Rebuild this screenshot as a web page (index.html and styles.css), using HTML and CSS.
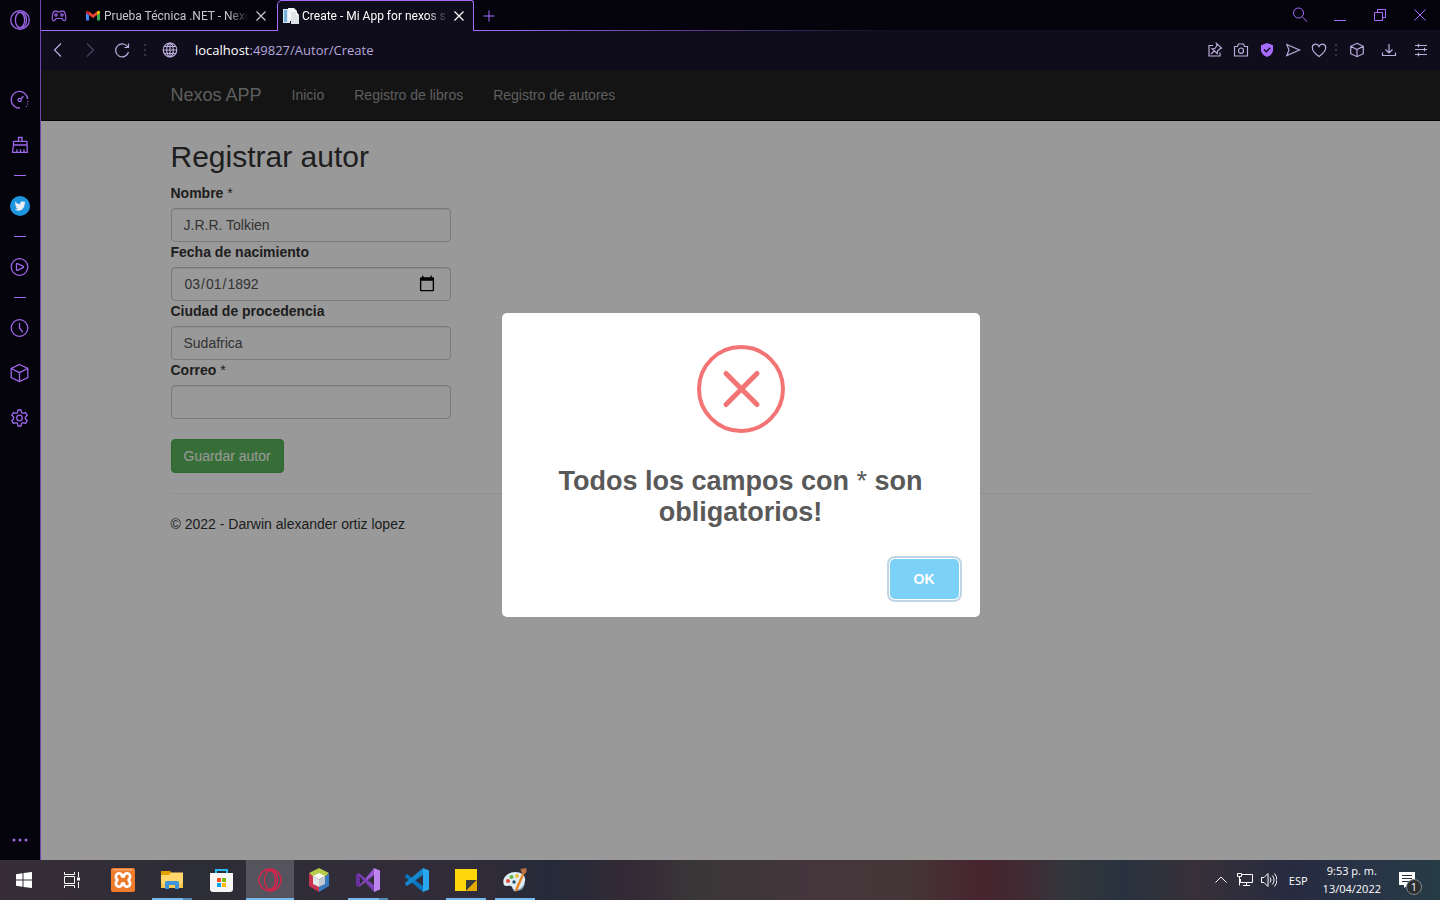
FILE: index.html
```html
<!DOCTYPE html>
<html lang="es">
<head>
<meta charset="utf-8">
<meta name="viewport" content="width=device-width, initial-scale=1">
<title>Create - Mi App for nexos s</title>
<link rel="stylesheet" href="styles.css">
</head>
<body>
<div class="desktop">
  <div class="browser">
    <aside class="sidebar">
      <button class="side-btn side-logo" aria-label="Opera"><svg viewBox="0 0 20 20"><circle cx="10" cy="10" r="9.3"/><ellipse cx="10" cy="10" rx="4.6" ry="7.6"/><path d="M7.5 2.9C12 .5 16.500 4 16.500 10s-4.500 9.500-9 7.100"/></svg></button>
      <div class="side-group">
        <button class="side-btn" aria-label="GX Control"><svg viewBox="0 0 20 20"><path d="M10 18A8.300 8.300 0 1 1 17.700 9"/><path d="M17.800 11v1M17.500 13.500v1M16.500 16v1" /><circle cx="9.700" cy="10" r="1.600"/><path d="M10.900 8.800l2.600-2.600"/></svg></button>
        <button class="side-btn" aria-label="GX Cleaner"><svg viewBox="0 0 20 20"><path d="M8.500 6.500V2.500h3.500v4M3.500 10V7q0-.7.700-.7h12.100q.7 0 .7.700v3zM3.500 10l-1 7.300h14.700V10M6.500 17.300l.7-3M10.500 17.300v-3M14 17.300v-3"/></svg></button>
      </div>
      <span class="side-dash"></span>
      <button class="side-btn" aria-label="Twitter"><svg class="solid" viewBox="0 0 20 20"><circle cx="10" cy="10" r="10" fill="#1d96df"/><path fill="#e9eef2" d="M15.800 6.400c-.4.200-.9.300-1.300.4.500-.3.800-.7 1-1.300-.5.300-.9.500-1.500.6a2.300 2.300 0 0 0-3.900 2.100C8.200 8.100 6.500 7.200 5.400 5.800c-.7 1.100-.3 2.400.7 3.100-.4 0-.7-.1-1-.3 0 1.200.8 2.100 1.800 2.300-.3.100-.7.100-1 0 .3.900 1.100 1.600 2.100 1.600-1 .8-2.200 1.100-3.400 1 4.800 3 10.100-.3 10-5.800.5-.4.900-.8 1.200-1.300z"/></svg></button>
      <span class="side-dash"></span>
      <button class="side-btn" aria-label="Player"><svg viewBox="0 0 20 20"><circle cx="9.500" cy="10" r="8.300"/><path d="M6.500 7.300q0-1 1-.7l5.500 2.500q1.200.8 0 1.600l-5.500 2.600q-1 .2-1-.8z"/></svg></button>
      <span class="side-dash"></span>
      <div class="side-group">
        <button class="side-btn" aria-label="Historial"><svg viewBox="0 0 20 20"><circle cx="9.500" cy="10" r="8.300"/><path d="M9.500 5v5l3.200 4"/></svg></button>
        <button class="side-btn" aria-label="Extensiones"><svg viewBox="0 0 20 20"><path d="M9.500 1.500l8.300 4v9l-8.300 4-8.300-4v-9zM1.200 5.500l8.300 4.200 8.300-4.200M9.500 9.700v8.800"/></svg></button>
        <button class="side-btn" aria-label="Ajustes"><svg viewBox="0 0 20 20"><path d="M8 2h3l.6 2.600 1.300.8 2.700-.8 1.600 2.700L15.300 9.300v1.400l1.900 2-1.600 2.700-2.700-.8-1.300.8L11 18H8l-.6-2.600-1.300-.8-2.700.8-1.600-2.700 1.900-2V9.300l-1.900-2 1.600-2.700 2.700.8 1.300-.8z"/><circle cx="9.500" cy="10" r="2.800"/></svg></button>
      </div>
      <button class="side-btn side-more" aria-label="Más"><svg class="solid" viewBox="0 0 20 20"><g fill="#9d67ea"><circle cx="4" cy="10" r="1.500"/><circle cx="10" cy="10" r="1.500"/><circle cx="16" cy="10" r="1.500"/></g></svg></button>
    </aside>

    <div class="window">
      <header class="tabstrip">
        <button class="corner" aria-label="GX Corner"><svg viewBox="0 0 16 16"><path d="M4 3.200h1.800l.8.700h2.800l.8-.7H12c1.500 0 2 1.200 2.500 3.800s.6 5.500-1 5.700c-1.200 0-2-1.700-2.700-2.200H5.200c-.7.500-1.500 2.200-2.700 2.200-1.600-.2-1.500-3.100-1-5.700S2.500 3.200 4 3.200z"/><circle cx="5" cy="7" r="1.200"/><circle cx="11" cy="7" r="1.200"/></svg></button>
        <div class="tab">
          <svg class="tab-icon gmail" viewBox="0 0 14 12"><path fill="#4285f4" d="M0 2v8.500h3V5z"/><path fill="#34a853" d="M14 2v8.500h-3V5z"/><path fill="#ea4335" d="M3 5V1.500l4 3 4-3V5L7 8z"/><path fill="#c5221f" d="M0 2Q.3-.3 3 1.500V5L0 3z"/><path fill="#fbbc04" d="M14 2q-.3-2.300-3-.5V5l3-2z"/></svg>
          <span class="tab-title">Prueba Técnica .NET - Nexo</span>
          <button class="tab-close" aria-label="Cerrar pestaña"><svg viewBox="0 0 10 10"><path d="M.5.5l9 9M9.500.5l-9 9"/></svg></button>
        </div>
        <div class="tab tab-active">
          <svg class="tab-icon" viewBox="0 0 16 16"><path fill="#d9e6ef" d="M0 1h7v14H0z"/><path fill="#78b5dc" d="M1 2h3v12H1z"/><path fill="#f3f5f7" d="M5 0h6l3 3v10H5z"/><path fill="#dfe4e8" d="M8 4h5l3 3v9H8z"/><path fill="#fff" d="M13 4v3h3z"/></svg>
          <span class="tab-title">Create - Mi App for nexos s</span>
          <button class="tab-close" aria-label="Cerrar pestaña"><svg viewBox="0 0 10 10"><path d="M.5.5l9 9M9.500.5l-9 9"/></svg></button>
        </div>
        <button class="new-tab" aria-label="Nueva pestaña"><svg viewBox="0 0 12 12"><path d="M6 .5v11M.5 6h11"/></svg></button>
        <div class="win-controls">
          <button aria-label="Buscar"><svg viewBox="0 0 16 16"><circle cx="6.500" cy="6" r="5"/><path d="M10.200 9.800l5 4.900"/></svg></button>
          <button aria-label="Minimizar"><svg viewBox="0 0 16 16"><path d="M2 13.500h12"/></svg></button>
          <button aria-label="Restaurar"><svg viewBox="0 0 16 16"><path d="M2.500 5.500h8v8h-8zM5.500 5.500v-3h8v8h-3"/></svg></button>
          <button aria-label="Cerrar"><svg viewBox="0 0 16 16"><path d="M2.500 2.500l11 11M13.500 2.500l-11 11"/></svg></button>
        </div>
      </header>

      <div class="toolbar">
        <div class="nav-buttons">
          <button aria-label="Atrás"><svg viewBox="0 0 16 16"><path d="M11 1.500L4.500 8l6.500 6.500"/></svg></button>
          <button class="dim" aria-label="Adelante"><svg viewBox="0 0 16 16"><path d="M5 1.500L11.500 8 5 14.500"/></svg></button>
          <button aria-label="Recargar"><svg viewBox="0 0 16 16"><path d="M14.500 10A6.500 6.500 0 1 1 14 5.500M14.500 1.500v4H10.500"/></svg></button>
        </div>
        <svg class="grip" viewBox="0 0 2 12"><path d="M0 0h2v2H0zM0 5h2v2H0zM0 10h2v2H0z"/></svg>
        <svg class="globe" viewBox="0 0 16 16"><circle cx="8" cy="8" r="6.800"/><ellipse cx="8" cy="8" rx="3.300" ry="6.800"/><path d="M1.200 8h13.600M8 1v14M2.200 4.500h11.600M2.200 11.500h11.600"/></svg>
        <div class="address" role="textbox" aria-label="Dirección"><span class="host">localhost</span>:49827/Autor/Create</div>
        <div class="tools">
          <button aria-label="Anclar"><svg viewBox="0 0 16 16"><path d="M6 3.500H2v10.500h11v-3.500M9.500 1.500l5 4.500-1.500.7-2.500 2.300-.3 2.500L5 6.800l3-.3 2-3zM7.300 9L4 12"/></svg></button>
          <button aria-label="Captura"><svg viewBox="0 0 16 16"><path d="M1.500 4.500h3l1-2.500h5l1 2.500h3v9.500h-13z"/><ellipse cx="8" cy="8.700" rx="2.500" ry="2.700"/></svg></button>
          <button aria-label="Bloqueador"><svg class="solid" viewBox="0 0 16 16"><path fill="#a66cff" d="M8 1l6 2.200v5q0 4.300-6 6.800-6-2.500-6-6.800v-5z"/><path fill="none" stroke="#171028" stroke-width="1.500" d="M5 7.500l2.300 2.300 4-4"/></svg></button>
          <button aria-label="Enviar"><svg viewBox="0 0 16 16"><path d="M1.800 2.500L14.500 8 1.800 13.500 4 8z"/></svg></button>
          <button aria-label="Favorito"><svg viewBox="0 0 16 16"><path d="M8 14.500C3.500 11.500 1.300 8.500 1.300 5.600 1.300 1.500 6.500.8 8 4.500c1.500-3.700 6.700-3 6.700 1.100 0 2.900-2.200 5.900-6.700 8.900z"/></svg></button>
          <svg class="grip" viewBox="0 0 2 12"><path d="M0 0h2v2H0zM0 5h2v2H0zM0 10h2v2H0z"/></svg>
          <button class="wide" aria-label="Extensiones"><svg viewBox="0 0 16 16"><path d="M8 1.300l6.300 3v7.400l-6.300 3-6.300-3V4.300zM1.700 4.300L8 7.500l6.300-3.200M8 7.500v7.200"/></svg></button>
          <button class="wide" aria-label="Descargas"><svg viewBox="0 0 16 16"><path d="M8 2v9M4.500 7.500L8 11l3.500-3.500M1.500 10.500v3h13v-3"/></svg></button>
          <button class="wide" aria-label="Configuración"><svg viewBox="0 0 16 16"><path d="M2 3.500h12M2 7.500h12M2 12.500h12M5.500 1.800v3.400M11.500 5.800v3.400M5.500 10.800v3.400"/></svg></button>
        </div>
      </div>

      <div class="page">
        <nav class="navbar">
          <div class="container navbar-inner">
            <a class="brand" href="#">Nexos APP</a>
            <a class="nav-link" href="#">Inicio</a>
            <a class="nav-link" href="#">Registro de libros</a>
            <a class="nav-link" href="#">Registro de autores</a>
          </div>
        </nav>
        <main class="container">
          <h2>Registrar autor</h2>
          <form class="form">
            <label for="nombre">Nombre <span class="required">*</span></label>
            <input id="nombre" type="text" value="J.R.R. Tolkien">
            <label for="fecha">Fecha de nacimiento</label>
            <input id="fecha" type="date" value="1892-03-01">
            <label for="ciudad">Ciudad de procedencia</label>
            <input id="ciudad" type="text" value="Sudafrica">
            <label for="correo">Correo <span class="required">*</span></label>
            <input id="correo" type="email">
            <button class="save" type="button">Guardar autor</button>
          </form>
          <hr>
          <footer>© 2022 - Darwin alexander ortiz lopez</footer>
        </main>
        <div class="overlay">
          <div class="modal" role="alertdialog" aria-labelledby="modal-title">
            <svg class="modal-icon" viewBox="0 0 88 88"><circle cx="44" cy="44" r="42"/><path d="M29 28.500l31 31M60 28.500l-31 31"/></svg>
            <h3 class="modal-title" id="modal-title">Todos los campos con <span class="required">*</span> son obligatorios!</h3>
            <div class="modal-footer"><button class="ok" type="button">OK</button></div>
          </div>
        </div>
      </div>
    </div>
  </div>

  <div class="taskbar">
    <button class="task" aria-label="Inicio"><svg viewBox="0 0 24 24"><path fill="#fff" d="M4 6.300l6.500-1v6.200H4zM11.500 5.100L20 4v7.500h-8.500zM4 12.500h6.500v6.200L4 17.700zM11.500 12.500H20V20l-8.500-1.100z"/></svg></button>
    <button class="task" aria-label="Vista de tareas"><svg viewBox="0 0 24 24" fill="none" stroke="#fff"><path d="M4.500 4v2.500h10V4M4.500 8.500h10v7h-10zM4.500 20v-2.500h10V20M18.500 4v5M18.500 14v6"/><path fill="#fff" stroke="none" d="M17 9.500h3v3h-3z"/></svg></button>
    <div class="pinned">
      <button class="task" aria-label="XAMPP"><svg viewBox="0 0 24 24"><rect width="24" height="24" rx="2" fill="#ef7b2d"/><path fill="#f5a66f" d="M2 1h20v1.500H2z"/><path fill="none" stroke="#fff" stroke-width="2.600" stroke-linejoin="round" d="M9 5.500C5 4.500 3.500 9 6.500 12 3.500 15 5 19.500 9 18.500q2-.5 2-3h2q0 2.500 2 3c4 1 5.500-3.500 2.500-6.500 3-3 1.500-7.500-2.500-6.500q-2 .5-2 3h-2q0-2.500-2-3z"/></svg></button>
      <button class="task open stacked" aria-label="Explorador"><svg viewBox="0 0 24 24"><path fill="#e2a100" d="M1 3h9l1.500 2v3H1z"/><path fill="#ffd76a" d="M1 7h8l2-2.500h12V20H1z"/><path fill="#f8c84e" d="M1 16h22v4H1z"/><path fill="#3c94dc" d="M5 21v-6.500q0-1.500 1.500-1.500h11q1.500 0 1.500 1.500V21h-4v-4H9v4z"/></svg></button>
      <button class="task" aria-label="Store"><svg viewBox="0 0 24 24"><path fill="none" stroke="#2abaf2" stroke-width="2" d="M7 6V2h11v4"/><path fill="#f5f5f5" d="M1 5h23v16q0 3-3 3H4q-3 0-3-3z"/><path fill="#f25022" d="M8 10h4v4H8z"/><path fill="#7fba00" d="M13 10h4v4h-4z"/><path fill="#00a4ef" d="M8 15h4v4H8z"/><path fill="#ffb900" d="M13 15h4v4h-4z"/></svg></button>
      <button class="task open current" aria-label="Opera GX"><svg viewBox="0 0 24 24" fill="none" stroke="#d9234b" stroke-width="1.300"><circle cx="12" cy="12" r="11"/><ellipse cx="12" cy="12" rx="5.500" ry="9.500"/><path d="M9.500 3C15 .8 19.500 5 19.500 12S15 23.200 9.500 21"/></svg></button>
      <button class="task" aria-label="NetBeans"><svg viewBox="0 0 24 24"><path fill="#b5cc4a" d="M12 0l10 5-4 4-6-3-6 3-4-4z"/><path fill="#c8324e" d="M2 5l4 4v7l6 3v5L2 18z"/><path fill="#3879c2" d="M22 5l-4 4v7l-6 3v5l10-6z"/><path fill="#f7f8f2" d="M12 5l6 3-6 3.500L6 8z"/><path fill="#e4e7e9" d="M6 8l6 3.500V19l-6-3z"/><path fill="#c2cbd1" d="M18 8l-6 3.500V19l6-3z"/></svg></button>
      <button class="task open stacked" aria-label="Visual Studio"><svg viewBox="0 0 24 24"><path fill="#68309d" d="M0 6.500L2.500 5l3 2.500L4 9v6l1.500 1.500L2.500 19 0 17.500z"/><path fill="#9655d0" d="M2.500 19L18 0v7L5.500 17z"/><path fill="#7b3fb8" d="M2.500 5L18 17v7L2.500 7z"/><path fill="#bd83ee" d="M18 0l6 2.500v19L18 24z"/></svg></button>
      <button class="task" aria-label="VS Code"><svg viewBox="0 0 24 24"><path fill="#0876bd" d="M0 8l2-2 16 12v6L0 9z"/><path fill="#1686cd" d="M0 16l2 2L18 7V0L0 15z"/><path fill="#2aa8ef" d="M18 0l6 2.500v19L18 24z"/></svg></button>
      <button class="task open" aria-label="Notas"><svg viewBox="0 0 24 24"><path fill="#ffd60a" d="M1 1h22v22H1z"/><path fill="#3b3a3c" d="M12 12h11L12 23z"/><path fill="#e6a900" d="M23 12v11H12z"/></svg></button>
      <button class="task open" aria-label="Paint"><svg viewBox="0 0 24 24"><path fill="#dfedf5" d="M12 4c7 0 11 4 10 9-1 6-5 9-10 9-3 0-2-3-4-4s-5 1-7-1C-2 10 5 4 12 4z"/><path fill="#9ec2d7" d="M12 22c5 0 9-3 10-9 0 7-4 10-10 10-2 0-2-1-2-2z"/><circle cx="5" cy="13" r="2" fill="#e04a3a"/><circle cx="8.500" cy="9" r="2" fill="#63b246"/><circle cx="14" cy="8" r="1.900" fill="#f2be2e"/><circle cx="11" cy="14" r="1.700" fill="#27506f"/><path fill="#e98724" d="M19 6l2 1-6 14q-2 3-3 3 0-3 1-5z"/><path fill="#b97343" d="M17.500 1l6-1v4l-2.500 3-2-1z"/></svg></button>
    </div>
    <div class="tray">
      <svg viewBox="0 0 16 16"><path d="M2.500 10.500L8 5l5.500 5.500"/></svg>
      <svg viewBox="0 0 16 16"><path d="M4 2.500h11.500v8H3.500V7M9.500 10.500v3M6 13.500h7M.5 1.500h4v3h-4zM2.500 4.500v9"/></svg>
      <svg viewBox="0 0 16 16"><path d="M.5 5.500h2.500l4-4v13l-4-4H.5zM9 5.500q2 2.500 0 5M11.300 3.500q3.500 4.500 0 9M13.500 1.500q5 6.500 0 13"/></svg>
      <span class="lang">ESP</span>
      <div class="clock"><span>9:53 p. m.</span><span>13/04/2022</span></div>
      <button class="notify" aria-label="Notificaciones"><svg viewBox="0 0 16 16"><path fill="#fff" stroke="none" d="M0 0h16v13h-7l-4 3v-3H0z"/><path stroke="#232b3c" d="M3 3.500h10M3 6.500h10M3 9.500h7"/></svg><span class="badge">1</span></button>
    </div>
  </div>
</div>
</body>
</html>
```
FILE: styles.css
```css
* { box-sizing: border-box; }
body { margin: 0; font-family: "Liberation Sans", Arial, sans-serif; }
button { padding: 0; border: 0; background: none; font: inherit; color: inherit; display: grid; place-items: center; flex: none; }
svg { display: block; flex: none; fill: none; }

.desktop { height: 100vh; display: flex; flex-direction: column; overflow: hidden; }
.browser { flex: 1; min-height: 0; display: flex; background: #05030c; }

/* Sidebar */
.sidebar { width: 41px; flex: none; display: flex; flex-direction: column; align-items: center; gap: 20px; padding: 10px 0; border-right: 1px solid #7045b0; }
.side-btn svg { width: 20px; height: 20px; stroke: #9d67ea; stroke-width: 1.300; }
.side-btn svg.solid { stroke: none; }
.side-logo { margin-bottom: 40px; }
.side-group { display: flex; flex-direction: column; gap: 25px; }
.side-dash { width: 12px; height: 1px; background: #a66cff; flex: none; }
.side-more { margin-top: auto; }

.window { flex: 1; min-width: 0; display: flex; flex-direction: column; }

/* Tab strip */
.tabstrip { height: 31px; flex: none; display: flex; align-items: center; font: 12px Roboto, "Noto Sans", sans-serif; color: #c9c7cf; background: linear-gradient(90deg, #a66cff 440px, #0f0c1b 860px) bottom / 100% 1px no-repeat; }
.corner { width: 36px; }
.corner svg { width: 16px; height: 16px; stroke: #9d67ea; stroke-width: 1.200; }
.tab { width: 200px; height: 31px; display: flex; align-items: center; gap: 4px; padding: 0 8px 0 9px; }
.tab-icon { width: 16px; height: 16px; }
.gmail { width: 14px; height: 12px; }
.tab-title { flex: 1; min-width: 0; overflow: hidden; white-space: nowrap; mask-image: linear-gradient(90deg, #000 85%, transparent); }
.tab-close { width: 16px; height: 16px; }
.tab:not(.tab-active) { gap: 4px; }
.tab-close svg { width: 10px; height: 10px; stroke: currentColor; stroke-width: 1.200; }
.tab-active { width: 197px; padding: 0 6px 1px 5px; gap: 3px; color: #fff; background: #0f0c1b; border: 1px solid #a66cff; border-bottom: 0; border-radius: 5px 3px 0 0; }
.new-tab { width: 30px; }
.new-tab svg { width: 12px; height: 12px; stroke: #a66cff; }
.win-controls { margin-left: auto; display: flex; gap: 24px; padding: 0 12px 1px 0; }
.win-controls svg { width: 16px; height: 16px; stroke: #a66cff; }

/* Address bar */
.toolbar { height: 39px; flex: none; display: flex; align-items: center; padding: 0 11px 2px 9px; background: #0f0c1b; color: #b5a8da; }
.toolbar button svg, .globe { width: 16px; height: 16px; stroke: #b9addb; stroke-width: 1.200; }
.toolbar button svg.solid { stroke: none; }
.toolbar .dim svg { stroke: #4b4560; }
.nav-buttons { display: flex; gap: 16px; margin-right: 14px; }
.grip { width: 2px; height: 12px; fill: #37324a; }
.globe { margin: 0 17px 0 16px; }
.address { font: 13px "Open Sans", "Noto Sans", sans-serif; }
.host { color: #fff; }
.tools { margin-left: auto; display: flex; align-items: center; gap: 10px; }
.tools .grip { margin: 0 2px 0 -2px; }
.wide + .wide { margin-left: 6px; }

/* Web page */
.page { position: relative; flex: 1; min-height: 0; overflow: hidden; background: #fff; color: #333; font-size: 14px; line-height: 20px; }
.container { max-width: 1170px; margin: 0 auto; padding: 0 15px; }
.navbar { background: #222; border-bottom: 1px solid #080808; }
.navbar-inner { height: 50px; display: flex; align-items: center; }
.navbar a { color: #9d9d9d; text-decoration: none; padding: 0 15px; }
.navbar .brand { font-size: 18px; padding-left: 0; }
h2 { margin: 19px 0 10px; font-size: 30px; font-weight: 400; line-height: 33px; }
.form { display: flex; flex-direction: column; align-items: flex-start; }
.form label { font-weight: 700; margin-bottom: 5px; }
.required { font-weight: 400; }
.form input { width: 280px; max-width: 100%; height: 34px; padding: 6px 12px; font: inherit; color: #555; background: #fff; border: 1px solid #ccc; border-radius: 4px; box-shadow: inset 0 1px 1px rgba(0, 0, 0, .075); }
.form input::-webkit-calendar-picker-indicator { width: 18px; height: 18px; }
.save { margin-top: 20px; height: 34px; padding: 0 12px; color: #fff; background: #5cb85c; border: 1px solid #4cae4c; border-radius: 4px; }
hr { margin: 20px 0; border: 0; border-top: 1px solid #eee; }

/* Alert */
.overlay { position: absolute; inset: 0; display: grid; place-items: center; background: rgba(0, 0, 0, .4); }
.modal { width: 478px; max-width: 90%; background: #fff; border-radius: 5px; display: flex; flex-direction: column; align-items: center; padding-top: 32px; }
.modal-icon { width: 88px; height: 88px; stroke: #f27474; stroke-width: 4; }
.modal-icon path { stroke-width: 5; stroke-linecap: round; }
.modal-title { margin: 33px 0 18px; padding: 0 16px; font-size: 27px; line-height: 31px; text-align: center; color: #595959; }
.modal-footer { align-self: stretch; display: flex; justify-content: flex-end; padding: 13px 21px 18px; }
.ok { width: 69px; height: 40px; border-radius: 5px; background: #7cd1f9; color: #fff; font-weight: 700; box-shadow: 0 0 0 1px #fff, 0 0 0 3px rgba(43, 114, 165, .29); }

/* Taskbar */
.taskbar { height: 40px; flex: none; display: flex; color: #fff; font: 11px "Open Sans", "Noto Sans", sans-serif; background: linear-gradient(90deg, #382d36, #2c2d37 14%, #322c39 27%, #302b38 34%, #252a39 38%, #342a36 44%, #393638 48%, #44363c 56%, #443637 63%, #48252e 68%, #402a33 71%, #33363c 74%, #28333f 78%, #373039 83%, #262b40 90%, #293447 95%, #263c45); }
.task { position: relative; width: 48px; height: 40px; }
.task svg { width: 24px; height: 24px; }
.pinned { display: flex; gap: 1px; margin-left: 3px; }
.open::after { content: ""; position: absolute; left: 4px; right: 4px; bottom: 0; height: 2px; background: #76b9ed; }
.stacked::after { background: linear-gradient(90deg, #76b9ed 31px, #568ab3 31px); }
.current { background: #55545e; }
.current::after { left: 0; right: 0; }
.tray { margin-left: auto; display: flex; align-items: center; gap: 8px; padding-right: 25px; }
.tray svg { width: 16px; height: 16px; stroke: #fff; }
.lang { margin: 0 7px 0 4px; }
.clock { display: flex; flex-direction: column; align-items: center; line-height: 18px; }
.notify { position: relative; margin-left: 10px; }
.badge { position: absolute; left: 7px; top: 7px; width: 16px; height: 16px; border-radius: 50%; border: 1px solid #858a8e; background: #2c2e30; line-height: 14px; text-align: center; }
```
